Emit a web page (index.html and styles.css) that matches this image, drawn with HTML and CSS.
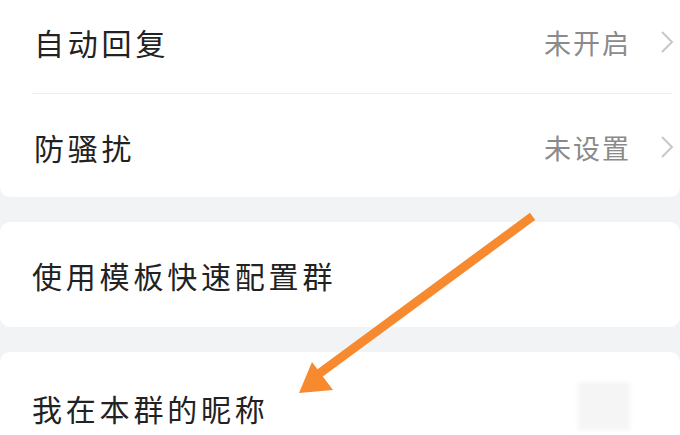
FILE: index.html
```html
<!DOCTYPE html>
<html lang="zh">
<head>
<meta charset="utf-8">
<link rel="stylesheet" href="styles.css">
</head>
<body>
<div class="page">
  <div class="card first">
    <div class="row top">
      <span class="label">自动回复</span>
      <span class="value">未开启<svg class="chev" viewBox="0 0 14 24" width="14" height="24"><path d="M2 2 L12 12 L2 22" fill="none" stroke="#c8c8c8" stroke-width="2"/></svg></span>
    </div>
    <div class="divider"></div>
    <div class="row bottom">
      <span class="label">防骚扰</span>
      <span class="value">未设置<svg class="chev" viewBox="0 0 14 24" width="14" height="24"><path d="M2 2 L12 12 L2 22" fill="none" stroke="#c8c8c8" stroke-width="2"/></svg></span>
    </div>
  </div>
  <div class="card mid">
    <div class="row single"><span class="label">使用模板快速配置群</span></div>
  </div>
  <div class="card last">
    <div class="row single"><span class="label">我在本群的昵称</span></div>
  </div>
  <div class="ghost"></div>
  <svg class="arrow" width="680" height="435" viewBox="0 0 680 435">
    <line x1="529" y1="219" x2="316" y2="376" stroke="#f78a2f" stroke-width="9" stroke-linecap="square"/>
    <polygon points="299,393 312,362 333,390" fill="#f78a2f"/>
  </svg>
</div>
</body>
</html>
```
FILE: styles.css
```css
html, body {
  margin: 0;
  padding: 0;
  background: #f2f3f5;
}
.page {
  position: relative;
  width: 680px;
  height: 435px;
  overflow: hidden;
  font-family: "Noto Sans CJK SC", "Noto Sans", sans-serif;
  display: flex;
  flex-direction: column;
  gap: 25px;
}
.card {
  background: #ffffff;
  border-radius: 10px;
  flex-shrink: 0;
}
.card.first {
  margin-top: -12px;
  padding-top: 12px;
  height: 197px;
  display: flex;
  flex-direction: column;
}
.card.mid {
  height: 105px;
}
.card.last {
  height: 120px;
  border-radius: 10px 10px 0 0;
}
.row {
  display: flex;
  align-items: center;
  justify-content: space-between;
  padding: 0 6px 0 34px;
  flex-shrink: 0;
}
.row.top {
  height: 84px;
  margin-bottom: 9px;
}
.row.bottom {
  height: 96px;
  padding-top: 5px;
}
.row.single {
  height: 105px;
  padding-left: 32px;
}
.card.last .row.single {
  height: 112px;
}
.label {
  font-size: 30px;
  letter-spacing: 3.8px;
  color: #222;
}
.value {
  display: flex;
  align-items: center;
  gap: 29px;
  font-size: 27px;
  letter-spacing: 2px;
  color: #8a8a8a;
}
.chev {
  display: block;
}
.divider {
  height: 1px;
  background: #ececec;
  margin: 0 8px 0 32px;
  flex-shrink: 0;
}
.ghost {
  position: absolute;
  left: 578px;
  top: 382px;
  width: 52px;
  height: 48px;
  background: #f5f5f5;
  filter: blur(2px);
}
.arrow {
  position: absolute;
  left: 0;
  top: 0;
}
```
